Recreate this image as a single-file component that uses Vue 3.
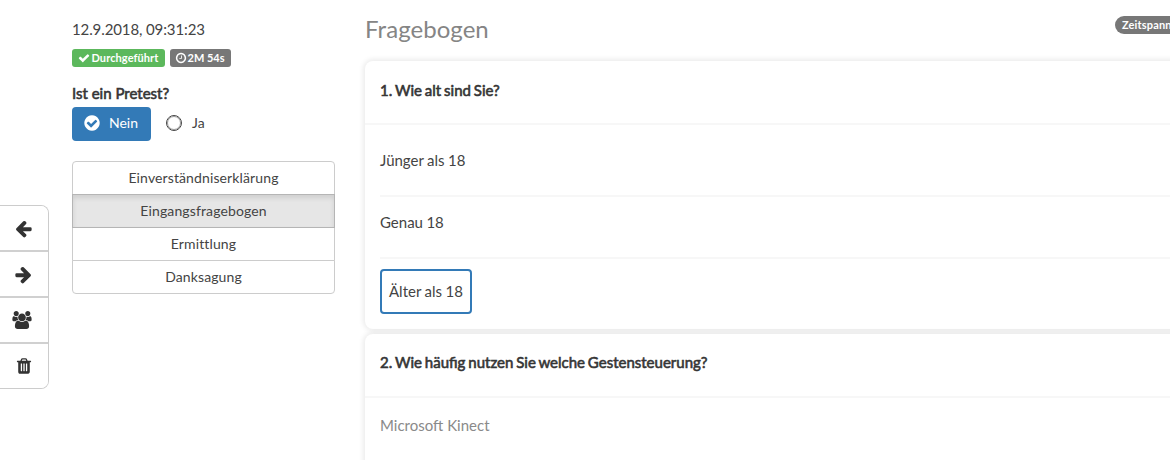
<script setup>
const circle = 'M1664 896q0 209-103 385.5t-279.5 279.5-385.5 103-385.5-103-279.5-279.5-103-385.5 103-385.5 279.5-279.5 385.5-103 385.5 103 279.5 279.5 103 385.5z'
const bar = 'q0-14-9-23t-23-9h-64q-14 0-23 9t-9 23v704q0 14 9 23t23 9h64q14 0 23-9t9-23z'
const icons = {
  check: 'M1671 566q0 40-28 68l-724 724-136 136q-28 28-68 28t-68-28l-136-136-362-362q-28-28-28-68t28-68l136-136q28-28 68-28t68 28l294 295 656-657q28-28 68-28t68 28l136 136q28 28 28 68z',
  clock: 'M1024 544v448q0 14-9 23t-23 9h-320q-14 0-23-9t-9-23v-64q0-14 9-23t23-9h224v-352q0-14 9-23t23-9h64q14 0 23 9t9 23zm416 352q0-148-73-273t-198-198-273-73-273 73-198 198-73 273 73 273 198 198 273 73 273-73 198-198 73-273z' + circle,
  checkCircle: 'M1412 734q0-28-18-46l-91-90q-19-19-45-19t-45 19l-408 407-226-226q-19-19-45-19t-45 19l-91 90q-18 18-18 46 0 27 18 45l362 362q19 19 45 19 27 0 46-19l543-543q18-18 18-45z' + circle
}
const tools = [
  { name: 'Zurück', cls: 'left', box: '0 0 1792 1792', d: 'M1664 896v128q0 53-32.5 90.5t-84.5 37.5h-704l293 294q38 36 38 90t-38 90l-75 76q-37 37-90 37-52 0-91-37l-651-652q-37-37-37-90 0-52 37-91l651-650q38-38 91-38 52 0 90 38l75 74q38 38 38 91t-38 91l-293 293h704q52 0 84.5 37.5t32.5 90.5z' },
  { name: 'Weiter', cls: 'right', box: '0 0 1792 1792', d: 'M1600 960q0 54-37 91l-651 651q-39 37-91 37-51 0-90-37l-75-75q-38-38-38-91t38-91l293-293h-704q-52 0-84.5-37.5t-32.5-90.5v-128q0-53 32.5-90.5t84.5-37.5h704l-293-294q-38-36-38-90t38-90l75-75q38-38 90-38 53 0 91 38l651 651q37 35 37 90z' },
  { name: 'Teilnehmer', cls: 'users', box: '0 0 1920 1792', d: 'M593 896q-162 5-265 128h-134q-82 0-138-40.5t-56-118.5q0-353 124-353 6 0 43.5 21t97.5 42.5 119 21.5q67 0 133-23-5 37-5 66 0 139 81 256zm1071 637q0 120-73 189.5t-194 69.5h-874q-121 0-194-69.5t-73-189.5q0-53 3.5-103.5t14-109 26.5-108.5 43-97.5 62-81 85.5-53.5 111.5-20q10 0 43 21.5t73 48 107 48 135 21.5 135-21.5 107-48 73-48 43-21.5q61 0 111.5 20t85.5 53.5 62 81 43 97.5 26.5 108.5 14 109 3.5 103.5zm-1024-1277q0 106-75 181t-181 75-181-75-75-181 75-181 181-75 181 75 75 181zm704 384q0 159-112.5 271.5t-271.5 112.5-271.5-112.5-112.5-271.5 112.5-271.5 271.5-112.5 271.5 112.5 112.5 271.5zm576 225q0 78-56 118.5t-138 40.5h-134q-103-123-265-128 81-117 81-256 0-29-5-66 66 23 133 23 59 0 119-21.5t97.5-42.5 43.5-21q124 0 124 353zm-128-609q0 106-75 181t-181 75-181-75-75-181 75-181 181-75 181 75 75 181z' },
  { name: 'Löschen', cls: 'trash', box: '0 0 1792 1792', d: 'M704 672' + bar + 'M960 672' + bar + 'M1216 672' + bar + 'M672 384h448l-48-117q-7-9-17-11h-317q-10 2-17 11zM1600 416v64q0 14-9 23t-23 9h-96v948q0 83-47 143.5t-113 60.5h-832q-66 0-113-58.5t-47-141.5v-952h-96q-14 0-23-9t-9-23v-64q0-14 9-23t23-9h309l70-167q15-37 54-63t79-26h320q40 0 79 26t54 63l70 167h309q14 0 23 9t9 23z' }
]
const steps = ['Einverständniserklärung', 'Eingangsfragebogen', 'Ermittlung', 'Danksagung']
const active = 'Eingangsfragebogen'
</script>

<template>
  <div class="page">
    <nav class="tools">
      <button v-for="t in tools" :key="t.name" :aria-label="t.name">
        <svg :class="t.cls" :viewBox="t.box"><path fill-rule="evenodd" :d="t.d" /></svg>
      </button>
    </nav>
    <aside class="side">
      <div class="date">12.9.2018, 09:31:23</div>
      <div class="labels">
        <span class="label green"><svg viewBox="0 0 1792 1792"><path :d="icons.check" /></svg><span class="done">Durchgeführt</span></span>
        <span class="label grey"><svg viewBox="0 0 1792 1792"><path fill-rule="evenodd" :d="icons.clock" /></svg><span class="time">2M 54s</span></span>
      </div>
      <div class="ask bold">Ist ein Pretest?</div>
      <div class="choices">
        <button class="choice on"><svg viewBox="0 0 1792 1792"><path fill-rule="evenodd" :d="icons.checkCircle" /></svg><span>Nein</span></button>
        <button class="choice"><i class="ring"></i><span>Ja</span></button>
      </div>
      <div class="steps">
        <button v-for="s in steps" :key="s" :class="{ active: s === active }">{{ s }}</button>
      </div>
    </aside>
    <main class="main">
      <header class="head">
        <h1>Fragebogen</h1>
        <span class="pill">Zeitspann</span>
      </header>
      <section class="card first">
        <h2 class="bold">1. Wie alt sind Sie?</h2>
        <ul>
          <li>Jünger als 18</li>
          <li>Genau 18</li>
          <li class="picked"><span class="chosen">Älter als 18</span></li>
        </ul>
      </section>
      <section class="card second">
        <h2 class="bold">2. Wie häufig nutzen Sie welche Gestensteuerung?</h2>
        <p>Microsoft Kinect</p>
      </section>
    </main>
  </div>
</template>

<style>
html, body { margin: 0; overflow: hidden; background: #fff; }
</style>

<style scoped>
* { box-sizing: border-box; }
.page { display: flex; height: 460px; width: 1170px; overflow: hidden; background: #fff; color: #444; font-family: Lato, "Liberation Sans", sans-serif; font-size: 15px; line-height: 20px; }
button { font: inherit; color: inherit; background: #fff; padding: 0; margin: 0; border: 0; }
svg { display: block; fill: currentColor; flex: none; }
.bold { font-weight: 400; -webkit-text-stroke: 0.6px currentColor; color: #353535; }

.tools { width: 49px; height: 184px; margin-top: 205px; flex: none; display: flex; flex-direction: column; border: 1px solid #ccc; border-left: 0; border-radius: 0 8px 8px 0; overflow: hidden; }
.tools button { height: 46px; flex: none; display: flex; align-items: center; padding-left: 14px; border-bottom: 2px solid #d0d0d0; }
.tools button:last-child { border-bottom: 0; height: 44px; }
.tools svg { width: 19px; height: 19px; color: #333; }
.tools .users { width: 20px; height: 18px; margin-left: -2px; }
.tools .trash { width: 18px; height: 18px; margin-left: 1px; }

.side { width: 263px; margin-left: 23px; flex: none; padding-top: 19px; }
.date { height: 30px; letter-spacing: -0.11px; }
.labels { display: flex; gap: 5px; height: 18px; }
.label { display: flex; align-items: center; height: 18px; border-radius: 3px; color: #fff; font-size: 11px; font-weight: 700; line-height: 18px; white-space: nowrap; }
.label svg { width: 12px; height: 12px; }
.green { width: 93px; background: #5cb85c; padding-left: 5.5px; gap: 2px; letter-spacing: 0.08px; }
.grey { width: 61px; background: #777; padding-left: 4.5px; gap: 1px; }
.ask { margin-top: 16px; height: 24px; }
.choices { display: flex; height: 34px; font-size: 14px; letter-spacing: 0.3px; }
.choice { display: flex; align-items: center; height: 34px; gap: 8px; }
.choice span { margin-top: -3px; }
.choice.on { width: 79px; background: #337ab7; color: #fff; border-radius: 4px; padding-left: 11px; }
.choice.on svg { width: 18px; height: 18px; margin-top: -2px; }
.ring { width: 16px; height: 16px; border: 1.5px solid #444; outline: 0.5px solid #999; outline-offset: -2px; border-radius: 50%; margin: -2px 2px 0 15px; }
.steps { margin-top: 20px; display: flex; flex-direction: column; }
.steps button { height: 34px; border: 1px solid #ccc; font-size: 14px; letter-spacing: 0.12px; margin-top: -1px; }
.steps button:first-child { margin-top: 0; border-radius: 4px 4px 0 0; }
.steps button:last-child { border-radius: 0 0 4px 4px; }
.steps .active { background: #e6e6e6; border-color: #b5b5b5; box-shadow: inset 0 3px 5px rgba(0, 0, 0, 0.1); position: relative; }

.main { margin-left: 30px; flex: none; width: 860px; }
.head { height: 61px; display: flex; }
h1 { margin: 0; padding-top: 14px; width: 750px; font-size: 24px; line-height: 30px; font-weight: 400; color: #858585; letter-spacing: 0.05px; }
.pill { margin-top: 16px; width: 90px; height: 18px; border-radius: 9px; background: #777; color: #fff; padding-left: 7px; font-size: 11px; font-weight: 700; line-height: 18px; letter-spacing: 0.15px; }
.card { background: #fff; border-radius: 8px; box-shadow: 0 0 5px 2px rgba(0, 0, 0, 0.08); }
.first { height: 268px; }
.second { height: 200px; margin-top: 5px; }
h2 { margin: 0; height: 64px; border-bottom: 2px solid #f7f7f7; padding: 19px 0 0 15px; font-size: 15px; line-height: 20px; word-spacing: -0.95px; }
.second h2 { padding-top: 18px; }
ul { list-style: none; margin: 0 0 0 15px; padding: 10px 0 0; word-spacing: -0.4px; }
li { height: 62px; border-bottom: 2px solid #f7f7f7; padding-top: 15px; }
li.picked { border: 0; padding-top: 10px; }
.chosen { display: block; width: 92px; height: 45px; border: 2px solid #337ab7; border-radius: 4px; padding: 10px 0 0 7px; white-space: nowrap; }
p { margin: 0; padding: 17px 0 0 15px; color: #8a8a8a; }
</style>
